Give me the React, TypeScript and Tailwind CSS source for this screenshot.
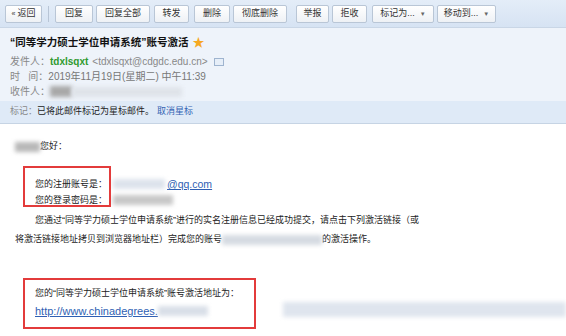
import React from 'react';

const font = { fontFamily: '"Liberation Sans", "Noto Sans CJK SC", sans-serif' };

const buttons = [
  { label: '回复', cls: 'w-[38px] ml-[0px]' },
  { label: '回复全部', cls: 'w-[54px] ml-[3px]' },
  { label: '转发', cls: 'w-[35px] ml-[4px]' },
  { label: '删除', cls: 'w-[36px] ml-[5px]' },
  { label: '彻底删除', cls: 'w-[54px] ml-[3px]' },
  { label: '举报', cls: 'w-[33px] ml-[9px]' },
  { label: '拒收', cls: 'w-[35px] ml-[3px]' },
  { label: '标记为...', cls: 'w-[62px] ml-[5px]', drop: true },
  { label: '移动到...', cls: 'w-[59px] ml-[3px]', drop: true },
];

const Btn: React.FC<{ label: string; cls: string; drop?: boolean }> = ({ label, cls, drop }) => (
  <div
    className={`h-[18px] flex items-center justify-center gap-[5px] rounded-[2px] border border-[#b9c6d6] bg-gradient-to-b from-white to-[#eef1f5] text-[9px] text-[#333] ${cls}`}
  >
    <span>{label}</span>
    {drop && <span className="text-[6px] text-[#666]">▼</span>}
  </div>
);

const Blur: React.FC<{ cls: string }> = ({ cls }) => <span className={`inline-block blur-[2px] align-middle ${cls}`} />;

export default function App() {
  return (
    <div className="w-[566px] h-[336px] overflow-hidden bg-white" style={font}>
      {/* toolbar */}
      <div className="h-[28px] bg-gradient-to-b from-[#e4edf8] to-[#d6e3f3] border-b border-[#c9d6e6] flex items-start pt-[5px] pl-[5px]">
        <div className="h-[18px] w-[37px] flex items-center justify-center rounded-[2px] border border-[#b9c6d6] bg-gradient-to-b from-white to-[#eef1f5] text-[9px] text-[#333]">
          <span className="text-[7px] mr-[2px]">«</span>返回
        </div>
        <div className="w-px h-[16px] bg-[#b8c5d6] mx-[6px] mt-[1px]" />
        {buttons.map((b) => (
          <Btn key={b.label} {...b} />
        ))}
      </div>

      {/* header */}
      <div className="bg-[#eef3fa] pl-[10px] pt-[7px] h-[73px]">
        <div className="flex items-center h-[16px] text-[10.5px] font-bold text-[#111]">
          “同等学力硕士学位申请系统”账号激活
          <span className="ml-[4px] text-[12px] text-[#f6a821]">★</span>
        </div>
        <div className="mt-[3px] text-[10px] leading-[15px] text-[#888]">
          <div className="flex items-center">
            <span>发件人：</span>
            <span className="font-bold text-[#2f9a2f]">tdxlsqxt</span>
            <span className="ml-[4px] text-[#888]">&lt;tdxlsqxt@cdgdc.edu.cn&gt;</span>
            <span className="ml-[6px] w-[10px] h-[8px] border border-[#9fb4cf] bg-[#e6eef8] inline-block" />
          </div>
          <div>
            <span>时&nbsp;&nbsp;&nbsp;间：</span>
            <span className="text-[#777]">2019年11月19日(星期二) 中午11:39</span>
          </div>
          <div className="flex items-center">
            <span>收件人：</span>
            <Blur cls="w-[22px] h-[11px] bg-[#a8a8a8]" />
            <Blur cls="w-[110px] h-[10px] bg-[#dfe3e9]" />
          </div>
        </div>
      </div>
      <div className="h-[23px] bg-[#dfeaf7] border-b border-[#c6d4e4] pl-[10px] flex items-center text-[9px]">
        <span className="text-[#888]">标记：</span>
        <span className="text-[#222]">已将此邮件标记为星标邮件。</span>
        <span className="ml-[3px] text-[#3463b3]">取消星标</span>
      </div>

      {/* body */}
      <div className="relative text-[9px] text-[#222] pt-[17px]">
        <div className="flex items-center pl-[15px] h-[12px]">
          <Blur cls="w-[25px] h-[10px] bg-[#b8b8b8]" />
          <span>您好：</span>
        </div>

        <div className="mt-[23px] pl-[35px] leading-[16px]">
          <div className="flex items-center">
            <span>您的注册账号是：</span>
            <Blur cls="ml-[6px] w-[52px] h-[10px] bg-[#dde3ec]" />
            <span className="ml-[2px] text-[#2f5fb3] underline text-[10.5px]">@qq.com</span>
          </div>
          <div className="flex items-center">
            <span>您的登录密码是：</span>
            <Blur cls="ml-[6px] w-[60px] h-[10px] bg-[#c8c8c8]" />
          </div>
        </div>

        <div className="mt-[3px] leading-[19px]">
          <div className="pl-[35px]">
            您通过“同等学力硕士学位申请系统”进行的实名注册信息已经成功提交，请点击下列激活链接（或
          </div>
          <div className="pl-[15px] flex items-center">
            <span>将激活链接地址拷贝到浏览器地址栏）完成您的账号</span>
            <Blur cls="w-[100px] h-[10px] bg-[#d6dbe2]" />
            <span>的激活操作。</span>
          </div>
        </div>

        <div className="mt-[35px] pl-[35px] leading-[18px]">
          <div>您的“同等学力硕士学位申请系统”账号激活地址为：</div>
          <div className="flex items-center">
            <span className="text-[#2f5fb3] underline text-[11px]">http://www.chinadegrees.</span>
            <Blur cls="w-[50px] h-[10px] bg-[#d9dfe8]" />
          </div>
        </div>

        {/* wide blurred tail of the link */}
        <div className="absolute left-[283px] top-[178px] w-[283px] h-[15px] bg-[#dfe5ee] blur-[2px]" />

        {/* red annotation boxes */}
        <div className="absolute left-[23px] top-[42px] w-[88px] h-[41px] border-2 border-[#e33b3b]" />
        <div className="absolute left-[23px] top-[154px] w-[233px] h-[51px] border-2 border-[#e33b3b]" />
      </div>
    </div>
  );
}
